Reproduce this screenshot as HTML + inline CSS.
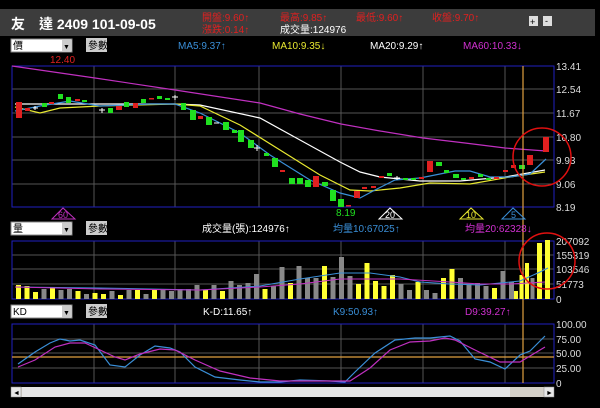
<!DOCTYPE html>
<html><head><meta charset="utf-8"><style>
body{margin:0;background:#000;width:600px;height:408px;overflow:hidden}
svg{display:block}
text{font-family:"Liberation Sans","Noto Sans CJK TC",sans-serif;font-size:10px}
</style></head><body>
<svg width="600" height="408" viewBox="0 0 600 408">
<rect width="600" height="408" fill="#000"/>
<!-- header -->
<rect x="0" y="9" width="595" height="27" fill="#3c3c3c"/>
<text x="11" y="29" fill="#fff" style="font-size:14px;font-weight:bold">友　達 2409 101-09-05</text>
<text x="202" y="21" fill="#e02020">開盤:9.60↑</text>
<text x="202" y="33" fill="#e02020">漲跌:0.14↑</text>
<text x="280" y="21" fill="#e02020">最高:9.85↑</text>
<text x="280" y="33" fill="#fff">成交量:124976</text>
<text x="356" y="21" fill="#e02020">最低:9.60↑</text>
<text x="432" y="21" fill="#e02020">收盤:9.70↑</text>
<rect x="529" y="16" width="9" height="10" fill="#ddd"/><text x="530" y="25" fill="#000" style="font-size:9px">+</text>
<rect x="543" y="16" width="9" height="10" fill="#ddd"/><text x="545" y="24" fill="#000" style="font-size:9px">-</text>
<!-- row controls -->
<g>
<rect x="11" y="39" width="61" height="13" fill="#fff" stroke="#888"/><rect x="62" y="40" width="9" height="11" fill="#ccc"/><text x="13" y="49" fill="#000">價</text><text x="63" y="49" fill="#000" style="font-size:7px">▼</text>
<rect x="86" y="38" width="21" height="14" fill="#ccc"/><text x="88" y="49" fill="#000">參數</text>
</g>
<text x="178" y="49" fill="#3a8fd8">MA5:9.37↑</text>
<text x="272" y="49" fill="#e8e830">MA10:9.35↓</text>
<text x="370" y="49" fill="#fff">MA20:9.29↑</text>
<text x="463" y="49" fill="#d030d0">MA60:10.33↓</text>
<text x="50" y="63" fill="#e02020">12.40</text>
<!-- main chart grid -->
<g stroke="#555" stroke-width="1">
<path d="M94 66V207M175 66V207M259 66V207M341 66V207M423 66V207M505 66V207"/>
<path d="M12 89H554M12 113H554M12 137H554M12 160H554M12 184H554"/>
<path d="M94 241V299M175 241V299M259 241V299M341 241V299M423 241V299M505 241V299"/>
<path d="M12 255H554M12 269H554M12 284H554"/>
<path d="M94 324V383M175 324V383M259 324V383M341 324V383M423 324V383M505 324V383"/>
<path d="M12 339H554M12 353H554M12 368H554"/>
</g>
<rect x="12" y="66" width="542" height="141" fill="none" stroke="#2020c0"/>
<rect x="12" y="241" width="542" height="58" fill="none" stroke="#2020c0"/>
<rect x="12" y="324" width="542" height="59" fill="none" stroke="#2020c0"/>
<g fill="#ddd">
<text x="556" y="70">13.41</text><text x="556" y="93">12.54</text><text x="556" y="117">11.67</text><text x="556" y="141">10.80</text><text x="556" y="164">9.93</text><text x="556" y="188">9.06</text><text x="556" y="211">8.19</text>
<text x="556" y="245">207092</text><text x="556" y="259">155319</text><text x="556" y="273">103546</text><text x="556" y="288">51773</text><text x="556" y="303">0</text>
<text x="556" y="328">100.00</text><text x="556" y="343">75.00</text><text x="556" y="357">50.00</text><text x="556" y="372">25.00</text><text x="556" y="387">0</text>
</g>
<!-- MAs -->
<g fill="none" stroke-width="1.2">
<polyline stroke="#c030c0" points="12,66 95,78 175,90 260,103 300,114 341,124 380,131 423,138 465,143 505,148 546,151"/>
<polyline stroke="#fff" points="15,104 100,104 175,104 200,105 260,118 300,140 340,162 360,172 380,177 420,181 460,181 505,177 545,170"/>
<polyline stroke="#e8e830" points="15,107 40,113 60,108 100,106 175,104 200,106 240,125 280,150 320,175 350,190 370,191 400,188 430,183 470,184 510,177 545,172"/>
<polyline stroke="#3a8fd8" points="15,111 40,106 70,101 100,106 150,104 175,104 200,113 240,133 270,155 310,180 340,193 360,198 375,190 395,180 420,178 455,171 470,171 490,177 510,177 530,174 546,159"/>
</g>
<!-- candles -->
<g fill="#20e020">
<rect x="42" y="103" width="5" height="4"/><rect x="58" y="94" width="5" height="5"/><rect x="66" y="97" width="5" height="6"/><rect x="82" y="100" width="5" height="2"/><rect x="108" y="108" width="5" height="5"/><rect x="124" y="102" width="5" height="5"/><rect x="141" y="99" width="5" height="4"/><rect x="157" y="96" width="5" height="3"/><rect x="165" y="98" width="5" height="2"/><rect x="181" y="103" width="5" height="7"/><rect x="190" y="110" width="6" height="10"/><rect x="206" y="117" width="6" height="8"/><rect x="223" y="122" width="6" height="8"/><rect x="232" y="130" width="5" height="3"/><rect x="238" y="130" width="6" height="12"/><rect x="248" y="140" width="6" height="8"/><rect x="264" y="153" width="5" height="3"/><rect x="272" y="158" width="6" height="9"/><rect x="289" y="178" width="6" height="6"/><rect x="297" y="178" width="6" height="6"/><rect x="305" y="180" width="6" height="7"/><rect x="322" y="182" width="6" height="4"/><rect x="330" y="190" width="6" height="11"/><rect x="338" y="199" width="6" height="8"/><rect x="387" y="173" width="5" height="3"/><rect x="403" y="178" width="5" height="2"/><rect x="411" y="178" width="5" height="2"/><rect x="436" y="162" width="6" height="4"/><rect x="444" y="170" width="5" height="3"/><rect x="453" y="174" width="6" height="4"/><rect x="461" y="178" width="5" height="2"/><rect x="478" y="174" width="5" height="3"/><rect x="486" y="178" width="5" height="2"/><rect x="519" y="165" width="6" height="4"/>
</g>
<g fill="#e02020">
<rect x="16" y="102" width="6" height="16"/><rect x="25" y="108" width="5" height="3"/><rect x="49" y="102" width="5" height="2"/><rect x="75" y="99" width="5" height="2"/><rect x="116" y="106" width="6" height="4"/><rect x="133" y="103" width="5" height="5"/><rect x="149" y="98" width="5" height="1.5"/><rect x="198" y="116" width="5" height="3"/><rect x="280" y="170" width="5" height="2"/><rect x="313" y="176" width="6" height="11"/><rect x="346" y="205" width="5" height="1.5"/><rect x="354" y="191" width="6" height="7"/><rect x="362" y="187" width="5" height="2"/><rect x="371" y="186" width="5" height="2"/><rect x="379" y="176" width="5" height="2"/><rect x="419" y="177" width="5" height="2"/><rect x="427" y="161" width="6" height="11"/><rect x="469" y="177" width="5" height="2"/><rect x="494" y="177" width="5" height="2"/><rect x="503" y="170" width="5" height="2"/><rect x="511" y="165" width="5" height="3"/><rect x="527" y="155" width="6" height="10"/><rect x="543" y="137" width="6" height="15"/>
</g>
<g stroke="#fff"><path d="M33 108h5M35 106v4M99 110h6M102 108v5M172 97h6M175 95v5M214 123h5M254 148h6M257 145v6M394 178h6M397 176v4"/></g>
<!-- orange vertical -->
<path d="M523 66V383" stroke="#e0a040" stroke-width="1.2"/>
<ellipse cx="542" cy="157" rx="29" ry="29" fill="none" stroke="#e01010" stroke-width="1.5"/>
<!-- triangles -->
<g fill="none" stroke-width="1">
<path d="M52 219L63 208L75 219Z" stroke="#c030c0"/><path d="M379 219L390 208L402 219Z" stroke="#fff"/><path d="M460 219L471 208L483 219Z" stroke="#e8e830"/><path d="M502 219L513 208L525 219Z" stroke="#3a8fd8"/>
</g>
<text x="58" y="218" fill="#c030c0" style="font-size:9px">60</text><text x="385" y="218" fill="#fff" style="font-size:9px">20</text><text x="466" y="218" fill="#e8e830" style="font-size:9px">10</text><text x="511" y="218" fill="#3a8fd8" style="font-size:9px">5</text>
<text x="336" y="216" fill="#20e020">8.19</text>
<!-- volume controls -->
<rect x="11" y="222" width="61" height="13" fill="#fff" stroke="#888"/><rect x="62" y="223" width="9" height="11" fill="#ccc"/><text x="13" y="232" fill="#000">量</text><text x="63" y="232" fill="#000" style="font-size:7px">▼</text>
<rect x="86" y="221" width="21" height="14" fill="#ccc"/><text x="88" y="232" fill="#000">參數</text>
<text x="202" y="232" fill="#fff">成交量(張):124976↑</text>
<text x="333" y="232" fill="#3a8fd8">均量10:67025↑</text>
<text x="465" y="232" fill="#d030d0">均量20:62328↓</text>
<!-- volume bars -->
<g id="vb">
<rect x="16" y="285" width="5" height="14" fill="#ffff33"/><rect x="24.5" y="286" width="5" height="13" fill="#ffff33"/><rect x="33" y="292" width="5" height="7" fill="#ffff33"/><rect x="41.5" y="289" width="5" height="10" fill="#888"/><rect x="50" y="288" width="5" height="11" fill="#ffff33"/><rect x="58.5" y="290" width="5" height="9" fill="#888"/><rect x="67" y="289" width="5" height="10" fill="#888"/><rect x="75.5" y="291" width="5" height="8" fill="#ffff33"/><rect x="84" y="294" width="5" height="5" fill="#888"/><rect x="92.5" y="293" width="5" height="6" fill="#ffff33"/><rect x="101" y="294" width="5" height="5" fill="#ffff33"/><rect x="109.5" y="291" width="5" height="8" fill="#888"/><rect x="118" y="295" width="5" height="4" fill="#ffff33"/><rect x="126.5" y="290" width="5" height="9" fill="#888"/><rect x="135" y="290" width="5" height="9" fill="#ffff33"/><rect x="143.5" y="294" width="5" height="5" fill="#888"/><rect x="152" y="289" width="5" height="10" fill="#ffff33"/><rect x="160.5" y="290" width="5" height="9" fill="#888"/><rect x="169" y="291" width="5" height="8" fill="#888"/><rect x="177.5" y="289" width="5" height="10" fill="#888"/><rect x="186" y="289" width="5" height="10" fill="#888"/><rect x="194.5" y="285" width="5" height="14" fill="#888"/><rect x="203" y="290" width="5" height="9" fill="#ffff33"/><rect x="211.5" y="285" width="5" height="14" fill="#888"/><rect x="220" y="291" width="5" height="8" fill="#ffff33"/><rect x="228.5" y="281" width="5" height="18" fill="#888"/><rect x="237" y="285" width="5" height="14" fill="#888"/><rect x="245.5" y="283" width="5" height="16" fill="#888"/><rect x="254" y="274" width="5" height="25" fill="#888"/><rect x="262.5" y="289" width="5" height="10" fill="#ffff33"/><rect x="271" y="286" width="5" height="13" fill="#888"/><rect x="279.5" y="267" width="5" height="32" fill="#888"/><rect x="288" y="283" width="5" height="16" fill="#ffff33"/><rect x="296.5" y="266" width="5" height="33" fill="#888"/><rect x="305" y="278" width="5" height="21" fill="#888"/><rect x="313.5" y="278" width="5" height="21" fill="#888"/><rect x="322" y="266" width="5" height="33" fill="#ffff33"/><rect x="330.5" y="277" width="5" height="22" fill="#888"/><rect x="339" y="257" width="5" height="42" fill="#888"/><rect x="347.5" y="276" width="5" height="23" fill="#888"/><rect x="356" y="284" width="5" height="15" fill="#ffff33"/><rect x="364.5" y="263" width="5" height="36" fill="#ffff33"/><rect x="373" y="281" width="5" height="18" fill="#ffff33"/><rect x="381.5" y="286" width="5" height="13" fill="#ffff33"/><rect x="390" y="275" width="5" height="24" fill="#ffff33"/><rect x="398.5" y="284" width="5" height="15" fill="#888"/><rect x="407" y="290" width="5" height="9" fill="#888"/><rect x="415.5" y="282" width="5" height="17" fill="#ffff33"/><rect x="424" y="290" width="5" height="9" fill="#888"/><rect x="432.5" y="293" width="5" height="6" fill="#888"/><rect x="441" y="278" width="5" height="21" fill="#ffff33"/><rect x="449.5" y="269" width="5" height="30" fill="#ffff33"/><rect x="458" y="278" width="5" height="21" fill="#888"/><rect x="466.5" y="284" width="5" height="15" fill="#888"/><rect x="475" y="283" width="5" height="16" fill="#888"/><rect x="483.5" y="286" width="5" height="13" fill="#888"/><rect x="492" y="288" width="5" height="11" fill="#ffff33"/><rect x="500.5" y="271" width="5" height="28" fill="#888"/><rect x="509" y="282" width="5" height="17" fill="#888"/><rect x="514" y="291" width="4" height="8" fill="#ffff33"/><rect x="519.5" y="275" width="4" height="24" fill="#ffff33"/><rect x="525" y="263" width="4" height="36" fill="#ffff33"/><rect x="530.5" y="278" width="4" height="21" fill="#888"/><rect x="537" y="243" width="5" height="56" fill="#ffff33"/><rect x="545" y="240" width="5" height="59" fill="#ffff33"/>
</g>
<g fill="none" stroke-width="1">
<polyline stroke="#3a8fd8" points="15,287 100,288 200,290 260,286 300,279 340,273 370,273 400,277 420,282 450,284 480,285 500,283 520,281 540,272 548,268"/>
<polyline stroke="#c030c0" points="15,287 100,289 200,290 260,287 300,284 340,279 400,279 450,282 480,284 510,284 545,282"/>
</g>
<ellipse cx="547" cy="261" rx="28" ry="28" fill="none" stroke="#e01010" stroke-width="1.5"/>
<!-- KD controls -->
<rect x="11" y="305" width="61" height="13" fill="#fff" stroke="#888"/><rect x="62" y="306" width="9" height="11" fill="#ccc"/><text x="13" y="315" fill="#000">KD</text><text x="63" y="315" fill="#000" style="font-size:7px">▼</text>
<rect x="86" y="304" width="21" height="14" fill="#ccc"/><text x="88" y="315" fill="#000">參數</text>
<text x="203" y="315" fill="#fff">K-D:11.65↑</text>
<text x="333" y="315" fill="#3a8fd8">K9:50.93↑</text>
<text x="465" y="315" fill="#d030d0">D9:39.27↑</text>
<path d="M12 357H554" stroke="#e0a040" stroke-width="1.2"/>
<g fill="none" stroke-width="1.2">
<polyline stroke="#3a8fd8" points="18,364 35,352 50,343 60,339 70,341 80,340 95,345 110,365 125,367 140,355 155,346 170,348 180,352 195,367 215,377 240,380 260,382 280,382 300,380 330,381 345,382 355,372 375,353 395,340 415,338 430,338 440,337 450,336 460,341 475,359 490,362 505,369 520,355 530,351 545,336"/>
<polyline stroke="#c030c0" points="18,367 35,360 55,347 70,343 85,343 100,350 115,357 125,360 140,354 160,349 175,350 195,360 220,371 250,378 280,381 320,381 350,381 370,368 390,350 410,342 430,341 445,338 455,340 475,350 500,362 520,362 545,347"/>
</g>
<!-- scrollbar -->
<rect x="11" y="387" width="543" height="10" fill="#d4d0c8"/>
<rect x="11" y="387" width="10" height="10" fill="#e8e8e8" stroke="#888" stroke-width="0.5"/><text x="13" y="395" fill="#000" style="font-size:7px">◄</text>
<rect x="544" y="387" width="10" height="10" fill="#e8e8e8" stroke="#888" stroke-width="0.5"/><text x="546" y="395" fill="#000" style="font-size:7px">►</text>
<rect x="22" y="387" width="488" height="10" fill="#e6e6e6"/>
</svg>
</body></html>
